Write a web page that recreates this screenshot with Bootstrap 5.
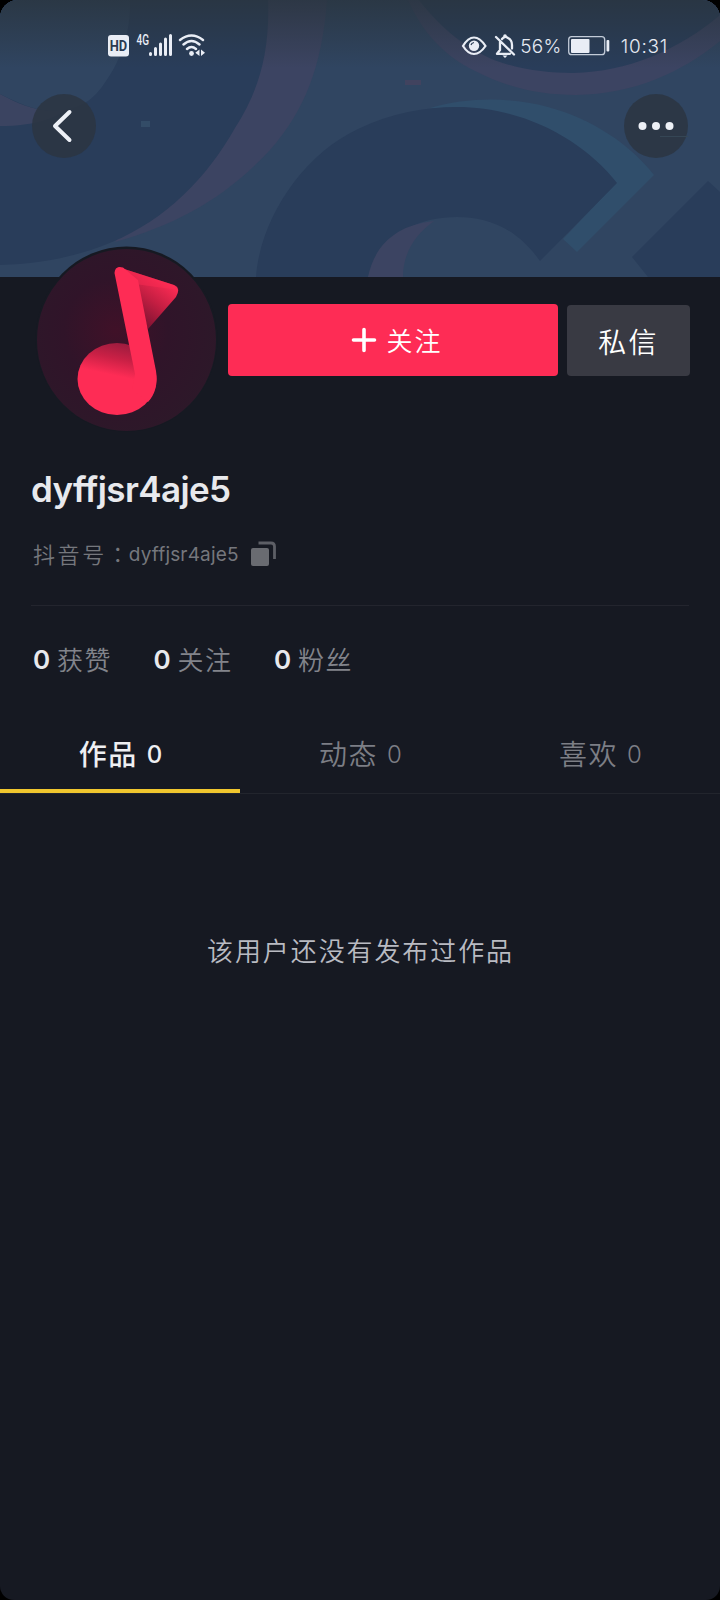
<!DOCTYPE html>
<html lang="zh-CN">
<head>
<meta charset="utf-8">
<meta name="viewport" content="width=device-width, initial-scale=1">
<title>dyffjsr4aje5</title>
<link href="https://cdn.jsdelivr.net/npm/bootstrap@5.3.0/dist/css/bootstrap.min.css" rel="stylesheet">
<style>
html,body{background:#000}
body{font-family:Inter,"Noto Sans CJK SC",sans-serif;color:#e8e9ed;font-weight:350;font-variant-ligatures:none}
.phone{width:720px;height:1600px;background:#161922;border-radius:18px 18px 14px 14px;line-height:1}
.cover{height:277px}
.cover-art{z-index:0}
.cover>.bar{position:relative;z-index:1}
.status{padding:32px 52px 0 107px;height:60px;color:#e6eaf2}
.status .clock{font-size:19px;font-weight:350;letter-spacing:.3px;margin-top:5px}
.status .time{margin-left:11px;letter-spacing:.75px}
.tools{padding:34px 32px 0}
.round-btn{width:64px;height:64px;background:rgba(43,53,66,.85);border:0;padding:0}
.profile{height:170px;padding:27px 30px 0 228px}
.avatar{left:34px;top:-33px}
.btn-follow,.btn-msg{border:0;border-radius:4px;color:#fff;font-weight:350;line-height:1}
.btn-follow{width:330px;height:72px;background:#fe2c55;font-size:26px;letter-spacing:2.1px;padding:3px 0 0 8px}
.plus{margin:-4px 9px 0 0}
.btn-msg{width:123px;height:71px;margin-top:1px;background:#393a43;font-size:28px;letter-spacing:2.2px}
.user-name{font-size:35px;font-weight:600;letter-spacing:-.6px;height:83px;padding:21px 0 0 31px}
.user-id{color:#75777d;height:75px;padding:12px 0 0 33px}
.id-label{font-size:22px;letter-spacing:2.6px}
.colon{font-family:"Noto Sans CJK TC",sans-serif;letter-spacing:0}
.id-value{font-size:19px;letter-spacing:.15px;font-weight:400;margin-top:3px}
.copy{margin-left:12px;margin-top:-1px}
.rule{height:1px;background:#23252e;margin:0 31px}
.stat-row{height:108px;padding:0 0 0 33px}
.stat{width:120.500px}
.stat b{font-size:26px;font-weight:600;width:24px}
.stat span{font-size:26px;color:#82848b;letter-spacing:1.6px;padding-top:2px}
.tab-row{height:80px;border-bottom:1px solid #22252d}
.tab-row .nav-link{height:79px;border:0;border-radius:0;color:#7c7e85;font-size:28px;letter-spacing:1.5px;padding:2px 0 0 1px;line-height:1}
.tab-row .nav-link.active{color:#eeeff2;background:none;font-weight:500;box-shadow:inset 0 -4px #f0c62e}
.tab-row .num{font-size:24px;margin-left:9px;letter-spacing:0}
.vacant{font-size:26px;letter-spacing:1.9px;color:#b9bbc2;margin-top:145px;padding-left:1px}
</style>
</head>
<body>
<main class="phone overflow-hidden position-relative">
  <header class="cover position-relative">
    <svg class="cover-art position-absolute top-0 start-0" width="720" height="277" viewBox="0 0 720 277" aria-hidden="true">
      <defs><linearGradient id="shade" x1="0" y1="0" x2="0" y2="1"><stop offset="0" stop-color="#29343e" stop-opacity=".8"/><stop offset="1" stop-color="#29343e" stop-opacity="0"/></linearGradient></defs>
      <rect width="720" height="277" fill="#304561"/>
      <path fill="#3c4462" d="M268 0H327C322 66 305 110 270 150C225 198 178 224 115 242Z"/>
      <path fill="#293d5a" d="M0 0H268C270 55 258 92 235 128C207 178 165 220 112 242C80 256 40 264 0 265Z"/>
      <path fill="#3b4461" d="M0 94C20 105 35 110 52 111L72 104C60 118 35 126 0 126Z"/>
      <path fill="#304561" d="M0 0H130C131 34 120 62 104 84C91 103 77 110 52 111C33 110 18 103 0 94Z"/>
      <path fill="#3c4462" d="M408 0C423 34 446 57 475 71C510 89 542 95 576 95C635 94 682 72 720 41V0Z"/>
      <path fill="#293d5a" d="M419 0C443 31 467 48 494 60C521 70 548 73 573 73C628 72 680 49 720 15V0Z"/>
      <path fill="#304e6b" d="M430 108C468 97 510 97 548 107C592 119 630 144 654 175L577 252L563 239L616 183L520 120Z"/>
      <path fill="#293d5a" d="M256 277C260 220 302 155 358 129C391 113 426 107 456 107C525 107 584 141 617 183L540 261C516 227 486 217 457 217C413 217 379 239 368 277Z"/>
      <path fill="#3c4462" d="M368 277C375 244 397 225 434 221C415 235 403 253 403 277Z"/>
      <path fill="#293d5a" d="M708 181L632 257L648 277H720V192Z"/>
      <rect x="141" y="121" width="9" height="6" fill="#334c67"/>
      <rect x="405" y="80" width="16" height="5" fill="#41435f"/>
      <rect width="720" height="68" fill="url(#shade)"/>
    </svg>
    <div class="bar status d-flex align-items-start">
      <svg width="100" height="28" viewBox="107 32 100 28" fill="#e9edf5" aria-hidden="true">
        <rect x="108" y="35" width="21" height="21.500" rx="3"/>
        <text x="109.700" y="50.500" font-family="Roboto" font-size="14" font-weight="700" fill="#2b3b52" textLength="17.500" lengthAdjust="spacingAndGlyphs">HD</text>
        <text x="136.500" y="44.500" font-family="Roboto" font-size="14" font-weight="500" textLength="12.500" lengthAdjust="spacingAndGlyphs">4G</text>
        <path d="M150.500 53.500V54.500M155.500 48.500V54.500M160.500 44V54.500M165.500 39V54.500M170.500 35.500V54.500" stroke="#e9edf5" stroke-width="3" stroke-linecap="round"/>
        <path d="M180 40Q191.500 31 203 40M183.500 44.500Q191.500 37.500 199.500 44.500M187 49Q191.500 45 196 49" fill="none" stroke="#e9edf5" stroke-width="2.400" stroke-linecap="round"/>
        <circle cx="191.500" cy="53.500" r="2.400"/><path d="M199.500 49.500V56L195.300 52.800ZM201 49.500L205 52.800L201 56Z"/>
      </svg>
      <div class="ms-auto d-flex align-items-start">
        <svg width="60" height="28" viewBox="462 32 60 28" fill="none" stroke="#e9edf5" stroke-width="2.200" aria-hidden="true">
          <path d="M465 46Q470 37.500 476 37.500T487.500 46Q482 54 476 54T465 46Z"/><circle cx="476" cy="45.800" r="5.200" fill="#e9edf5" stroke="none"/><path d="M473 45Q473.500 42.800 476 42.500" stroke="#2a3b54" stroke-width="1.200"/>
          <path d="M498 37L516 54.500M502 42V50L499 53.800H512M504 39Q506.500 35.500 510 38Q514 40 514 45V48.500" stroke-width="2.300" stroke-linecap="round" stroke-linejoin="round"/><path d="M504.500 55.500H509.500L507 58Z" fill="#e9edf5" stroke="none"/><circle cx="507" cy="36" r="1.800" fill="#e9edf5" stroke="none"/>
        </svg>
        <span class="clock">56%</span>
        <svg class="ms-1" width="44" height="28" viewBox="566 32 44 28" fill="none" aria-hidden="true"><rect x="568.700" y="36.700" width="36" height="18" rx="3" stroke="#c2cbd8" stroke-width="1.300"/><rect x="571" y="39" width="18.500" height="14" rx="1" fill="#e9edf5"/><rect x="606.500" y="40" width="2.800" height="11.500" rx="1" fill="#e9edf5"/></svg>
        <span class="clock time">10:31</span>
      </div>
    </div>
    <div class="bar tools d-flex justify-content-between">
      <button class="round-btn rounded-circle" aria-label="返回"><svg class="d-block" width="64" height="64" viewBox="0 0 64 64"><path d="M37.500 18L23 32L37.500 46" fill="none" stroke="#edf0f6" stroke-width="4" stroke-linecap="round" stroke-linejoin="round"/></svg></button>
      <button class="round-btn rounded-circle" aria-label="更多"><svg class="d-block" width="64" height="64" viewBox="0 0 64 64" fill="#edf0f6"><circle cx="18.500" cy="32" r="4"/><circle cx="32" cy="32" r="4"/><circle cx="45.500" cy="32" r="4"/><rect x="36" y="42" width="28" height="1" fill="#354655"/></svg></button>
    </div>
  </header>

  <section class="profile position-relative d-flex align-items-start justify-content-between">
    <svg class="avatar position-absolute" width="186" height="190" viewBox="34 244 186 190" aria-hidden="true">
      <defs>
        <radialGradient id="disc" cx=".44" cy=".45" r=".58"><stop offset="0" stop-color="#401128"/><stop offset=".5" stop-color="#301429"/><stop offset="1" stop-color="#2d1829"/></radialGradient>
        <linearGradient id="flag" x1="168" y1="283" x2="140" y2="320" gradientUnits="userSpaceOnUse"><stop offset="0" stop-color="#fa2b53"/><stop offset=".5" stop-color="#c41e42"/><stop offset="1" stop-color="#821433"/></linearGradient>
        <linearGradient id="head" x1="130" y1="340" x2="122" y2="377" gradientUnits="userSpaceOnUse"><stop offset="0" stop-color="#8f1a3c"/><stop offset=".55" stop-color="#c92045"/><stop offset="1" stop-color="#fe2c55"/></linearGradient>
      </defs>
      <ellipse cx="126.500" cy="339" rx="91" ry="92.500" fill="#161922"/>
      <ellipse cx="126.500" cy="340" rx="89.500" ry="91" fill="url(#disc)"/>
      <path d="M118 267L174 285Q181 288 176 297L148 329L135 290Z" fill="url(#flag)"/>
      <path d="M118 267L174 285Q179 287 178 290L135 284Z" fill="#fe2c55" opacity=".45"/>
      <ellipse cx="117" cy="379" rx="39.500" ry="36" fill="url(#head)"/>
      <path d="M114.500 273Q115 265 123 267.500L138 280L156 371Q159 390 148 402L132 390L135 374Z" fill="#fe2c55"/>
    </svg>
    <button class="btn btn-follow d-flex align-items-center justify-content-center">
      <svg class="plus" width="26" height="26" viewBox="0 0 26 26" aria-hidden="true"><path d="M13 2.500V23.500M2.500 13H23.500" stroke="#fff" stroke-width="3.600" stroke-linecap="round"/></svg><span>关注</span>
    </button>
    <button class="btn btn-msg p-0 pt-1">私信</button>
  </section>

  <h1 class="user-name m-0">dyffjsr4aje5</h1>
  <div class="user-id d-flex align-items-start">
    <span class="id-label">抖音号<span class="colon" lang="zh-TW">：</span></span><span class="id-value">dyffjsr4aje5</span>
    <svg class="copy" width="26" height="26" viewBox="0 0 26 26" aria-hidden="true"><rect x="0" y="7" width="18" height="18" rx="2" fill="#696b71"/><path d="M7.500 2H20Q23.500 2 23.500 5.500V18" fill="none" stroke="#5d5f66" stroke-width="2.800"/></svg>
  </div>
  <div class="rule"></div>
  <section class="stat-row d-flex align-items-center">
    <div class="stat d-flex align-items-center"><b>0</b><span>获赞</span></div>
    <div class="stat d-flex align-items-center"><b>0</b><span>关注</span></div>
    <div class="stat d-flex align-items-center"><b>0</b><span>粉丝</span></div>
  </section>
  <nav class="nav nav-pills nav-fill tab-row">
    <a class="nav-link active col-4 d-flex align-items-center justify-content-center" href="#">作品<span class="num">0</span></a>
    <a class="nav-link col-4 d-flex align-items-center justify-content-center" href="#">动态<span class="num">0</span></a>
    <a class="nav-link col-4 d-flex align-items-center justify-content-center" href="#">喜欢<span class="num">0</span></a>
  </nav>
  <p class="vacant text-center mb-0">该用户还没有发布过作品</p>
</main>
<script src="https://cdn.jsdelivr.net/npm/bootstrap@5.3.0/dist/js/bootstrap.bundle.min.js"></script>
</body>
</html>
